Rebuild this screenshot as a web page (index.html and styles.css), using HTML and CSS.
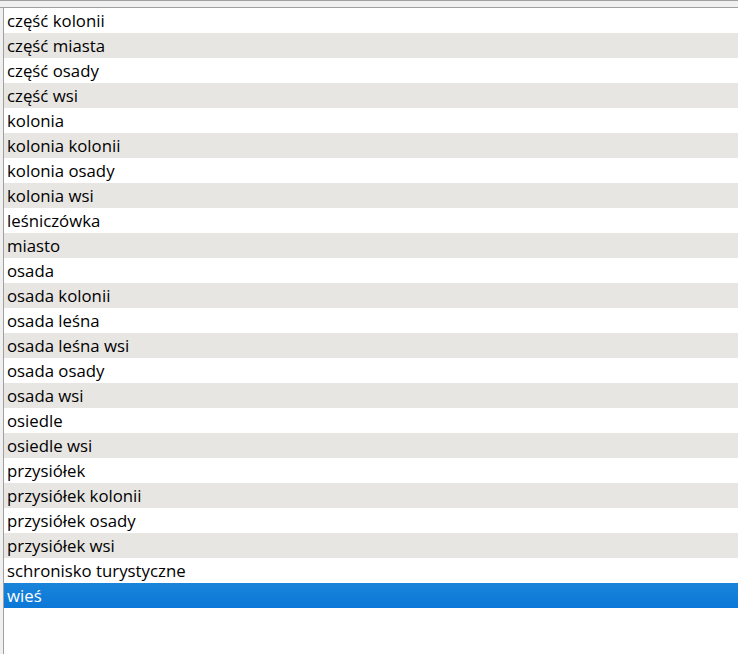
FILE: index.html
```html
<!DOCTYPE html>
<html>
<head><meta charset="utf-8"><link rel="stylesheet" href="styles.css"></head>
<body>
<div class="frame">
  <div class="topbar"></div>
  <div class="panel">
    <ul class="list">
      <li class="row">część kolonii</li>
      <li class="row alt">część miasta</li>
      <li class="row">część osady</li>
      <li class="row alt">część wsi</li>
      <li class="row">kolonia</li>
      <li class="row alt">kolonia kolonii</li>
      <li class="row">kolonia osady</li>
      <li class="row alt">kolonia wsi</li>
      <li class="row">leśniczówka</li>
      <li class="row alt">miasto</li>
      <li class="row">osada</li>
      <li class="row alt">osada kolonii</li>
      <li class="row">osada leśna</li>
      <li class="row alt">osada leśna wsi</li>
      <li class="row">osada osady</li>
      <li class="row alt">osada wsi</li>
      <li class="row">osiedle</li>
      <li class="row alt">osiedle wsi</li>
      <li class="row">przysiółek</li>
      <li class="row alt">przysiółek kolonii</li>
      <li class="row">przysiółek osady</li>
      <li class="row alt">przysiółek wsi</li>
      <li class="row">schronisko turystyczne</li>
      <li class="row selected">wieś</li>
    </ul>
  </div>
</div>
</body>
</html>
```
FILE: styles.css
```css
html, body {
  margin: 0;
  padding: 0;
  background: #f0f0f0;
  width: 738px;
  height: 654px;
  overflow: hidden;
}
.frame {
  display: flex;
  flex-direction: column;
  height: 654px;
}
.topbar {
  height: 6px;
  border-top: 1px solid #a0a0a0;
  border-bottom: 1px solid #a0a0a0;
  background: #f0f0f0;
  flex: none;
}
.panel {
  flex: 1;
  margin-left: 3px;
  border-left: 1px solid #a0a0a0;
  background: #ffffff;
}
.list {
  list-style: none;
  margin: 0;
  padding: 0;
}
.row {
  height: 25px;
  line-height: 26px;
  padding-left: 3px;
  font-family: "Open Sans", "Noto Sans", sans-serif;
  font-size: 16.8px;
  color: #000;
  white-space: nowrap;
}
.alt {
  background: #e8e6e3;
}
.selected {
  background: linear-gradient(#1a84d9, #0b78d8);
  color: #ffffff;
}
```
